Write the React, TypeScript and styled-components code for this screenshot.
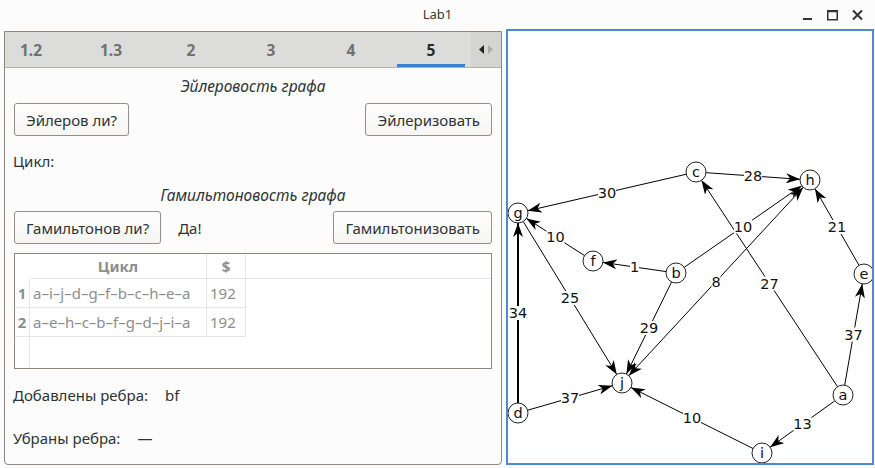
import styled, { createGlobalStyle } from "styled-components";

const GlobalStyle = createGlobalStyle`
  html, body {
    margin: 0;
    padding: 0;
    background: #fcfcfc;
  }
  body {
    font-family: "Noto Sans", "DejaVu Sans", sans-serif;
    font-size: 15px;
    color: #2e3436;
  }
`;

const Window = styled.div`
  width: 875px;
  height: 468px;
  display: flex;
  flex-direction: column;
  overflow: hidden;
`;

const TitleBar = styled.div`
  height: 29px;
  display: grid;
  grid-template-columns: 1fr auto 1fr;
  align-items: center;
`;

const Title = styled.div`
  font-size: 13px;
  color: #3a3a3a;
  padding-bottom: 1px;
`;

const Controls = styled.div`
  justify-self: end;
  display: flex;
  gap: 14px;
  padding-right: 12px;
  align-items: center;
`;

const Main = styled.div`
  display: flex;
  align-items: flex-start;
  gap: 4px;
  padding-left: 4px;
`;

const LeftPanel = styled.div`
  box-sizing: border-box;
  width: 498px;
  height: 434px;
  margin-top: 2px;
  border: 1px solid #8e877d;
  border-radius: 0 0 4px 4px;
  background: #fcfcfc;
  display: flex;
  flex-direction: column;
`;

const TabBar = styled.div`
  height: 35px;
  display: flex;
  background: #dcdcda;
  border-bottom: 1px solid #b5afa6;
`;

const TabStrip = styled.div`
  flex: 1;
  display: flex;
  overflow: hidden;
`;

const Tab = styled.div<{ $active?: boolean; $first?: boolean }>`
  flex: 0 0 80px;
  margin-left: ${(p) => (p.$first ? "-14px" : "0")};
  position: relative;
  display: flex;
  align-items: center;
  justify-content: center;
  font-weight: 700;
  font-size: 15.5px;
  color: ${(p) => (p.$active ? "#2a2a2a" : "#717171")};
  &::after {
    content: "";
    display: ${(p) => (p.$active ? "block" : "none")};
    position: absolute;
    left: 6px;
    right: 6px;
    bottom: 0;
    height: 3px;
    background: #3b7fd1;
  }
`;

const TabScroll = styled.div`
  width: 30px;
  background: #d4d4d2;
  display: flex;
  align-items: center;
  justify-content: center;
  gap: 4px;
`;

const Content = styled.div`
  display: flex;
  flex-direction: column;
  padding: 0 9px 0 8px;
`;

const Heading = styled.div<{ $top: number }>`
  margin-top: ${(p) => p.$top}px;
  height: 20px;
  line-height: 20px;
  text-align: center;
  font-style: italic;
  font-size: 15.5px;
  padding-left: 1px;
`;

const ButtonRow = styled.div<{ $top: number }>`
  margin-top: ${(p) => p.$top}px;
  display: flex;
  align-items: center;
  gap: 17px;
  padding-left: 1px;
`;

const Button = styled.button`
  height: 33px;
  padding: 0 11px;
  font-family: inherit;
  font-size: 15px;
  color: #2e3436;
  background: linear-gradient(#fefefe, #f5f5f4);
  border: 1px solid #948e85;
  border-radius: 3px;
`;

const Spacer = styled.div`
  flex: 1;
`;

const Line = styled.div<{ $top: number }>`
  margin-top: ${(p) => p.$top}px;
  height: 20px;
  line-height: 20px;
  display: flex;
  gap: 17px;
`;

const Table = styled.div`
  margin-top: 9px;
  margin-left: 1px;
  height: 116px;
  box-sizing: border-box;
  border: 1px solid #8d8982;
  background: #ffffff;
  display: grid;
  grid-template-columns: 15px 177px 39px 1fr;
  grid-template-rows: 25px 29px 29px 1fr;
  color: #8d8d8d;
`;

const Cell = styled.div<{ $head?: boolean; $right?: boolean; $bottom?: boolean; $center?: boolean }>`
  box-sizing: border-box;
  display: flex;
  align-items: center;
  justify-content: ${(p) => (p.$center ? "center" : "flex-start")};
  padding-left: ${(p) => (p.$center ? "0" : "3px")};
  font-weight: ${(p) => (p.$head ? 700 : 400)};
  border-right: ${(p) => (p.$right ? "1px solid #e6e6e6" : "none")};
  border-bottom: ${(p) => (p.$bottom ? "1px solid #e6e6e6" : "none")};
  white-space: nowrap;
  overflow: hidden;
`;

const GraphPanel = styled.div`
  box-sizing: border-box;
  width: 368px;
  height: 436px;
  border: 2px solid #4d8bd4;
  background: #ffffff;
  overflow: hidden;
  svg {
    display: block;
  }
`;

type P = [number, number];

const nodes: Record<string, P> = {
  c: [696, 172],
  h: [810, 180],
  g: [518, 213],
  f: [593, 261],
  b: [676, 273],
  e: [864, 274],
  j: [622, 383],
  d: [518, 413],
  a: [843, 395],
  i: [762, 453],
};

const edges: { from: string; to: string; w: number; both?: boolean; thick?: boolean }[] = [
  { from: "c", to: "h", w: 28 },
  { from: "c", to: "g", w: 30 },
  { from: "f", to: "g", w: 10 },
  { from: "b", to: "f", w: 1 },
  { from: "b", to: "h", w: 10 },
  { from: "j", to: "h", w: 8, both: true },
  { from: "a", to: "c", w: 27 },
  { from: "e", to: "h", w: 21 },
  { from: "a", to: "e", w: 37 },
  { from: "a", to: "i", w: 13 },
  { from: "i", to: "j", w: 10 },
  { from: "d", to: "j", w: 37 },
  { from: "d", to: "g", w: 34, thick: true },
  { from: "g", to: "j", w: 25 },
  { from: "b", to: "j", w: 29 },
];

const R = 10;

function Graph() {
  return (
    <svg width="364" height="432" viewBox="508 31 364 432">
      <defs>
        <marker
          id="arr"
          viewBox="0 0 14 10"
          refX="14"
          refY="5"
          markerWidth="14"
          markerHeight="10"
          markerUnits="userSpaceOnUse"
          orient="auto-start-reverse"
        >
          <path d="M0,0 L14,5 L0,10 L4,5 Z" fill="#000" />
        </marker>
      </defs>
      {edges.map((e, k) => {
        const [x1, y1] = nodes[e.from];
        const [x2, y2] = nodes[e.to];
        const len = Math.hypot(x2 - x1, y2 - y1);
        const ux = (x2 - x1) / len;
        const uy = (y2 - y1) / len;
        return (
          <line
            key={k}
            x1={x1 + ux * R}
            y1={y1 + uy * R}
            x2={x2 - ux * R}
            y2={y2 - uy * R}
            stroke="#000"
            strokeWidth={e.thick ? 2 : 1}
            markerEnd="url(#arr)"
            markerStart={e.both ? "url(#arr)" : undefined}
          />
        );
      })}
      {edges.map((e, k) => {
        const [x1, y1] = nodes[e.from];
        const [x2, y2] = nodes[e.to];
        const mx = (x1 + x2) / 2;
        const my = (y1 + y2) / 2;
        const t = String(e.w);
        const w = t.length * 9;
        return (
          <g key={k}>
            <rect x={mx - w / 2} y={my - 7} width={w} height={14} fill="#fff" />
            <text
              x={mx}
              y={my + 5}
              textAnchor="middle"
              fontFamily="DejaVu Sans, sans-serif"
              fontSize="14.5"
              fill="#111"
            >
              {t}
            </text>
          </g>
        );
      })}
      {Object.entries(nodes).map(([name, [x, y]]) => (
        <g key={name}>
          <circle cx={x} cy={y} r={R} fill="#fff" stroke="#222" strokeWidth="1" />
          <text
            x={x}
            y={y + 5}
            textAnchor="middle"
            fontFamily="DejaVu Sans, sans-serif"
            fontSize="14.5"
            fill="#111"
          >
            {name}
          </text>
        </g>
      ))}
    </svg>
  );
}

export default function App() {
  const tabs = ["1.2", "1.3", "2", "3", "4", "5"];
  const rows = [
    ["a–i–j–d–g–f–b–c–h–e–a", "192"],
    ["a–e–h–c–b–f–g–d–j–i–a", "192"],
  ];
  return (
    <Window>
      <GlobalStyle />
      <TitleBar>
        <div />
        <Title>Lab1</Title>
        <Controls>
          <svg width="10" height="12" viewBox="0 0 10 12">
            <rect x="0" y="9" width="9" height="2" fill="#333" />
          </svg>
          <svg width="11" height="12" viewBox="0 0 11 12">
            <rect x="0.75" y="1.75" width="9.5" height="9" fill="none" stroke="#333" strokeWidth="1.5" />
            <rect x="0.75" y="1.75" width="9.5" height="1.5" fill="#333" />
          </svg>
          <svg width="11" height="12" viewBox="0 0 11 12">
            <path d="M1,1.5 L10,10.5 M10,1.5 L1,10.5" stroke="#333" strokeWidth="2" />
          </svg>
        </Controls>
      </TitleBar>
      <Main>
        <LeftPanel>
          <TabBar>
            <TabStrip>
              {tabs.map((t, k) => (
                <Tab key={t} $first={k === 0} $active={t === "5"}>
                  {t}
                </Tab>
              ))}
            </TabStrip>
            <TabScroll>
              <svg width="5" height="9" viewBox="0 0 5 9">
                <path d="M5,0 L0,4.5 L5,9 Z" fill="#222" />
              </svg>
              <svg width="5" height="9" viewBox="0 0 5 9">
                <path d="M0,0 L5,4.5 L0,9 Z" fill="#aaa" />
              </svg>
            </TabScroll>
          </TabBar>
          <Content>
            <Heading $top={8}>Эйлеровость графа</Heading>
            <ButtonRow $top={7}>
              <Button>Эйлеров ли?</Button>
              <Spacer />
              <Button>Эйлеризовать</Button>
            </ButtonRow>
            <Line $top={15}>Цикл:</Line>
            <Heading $top={14}>Гамильтоновость графа</Heading>
            <ButtonRow $top={6}>
              <Button>Гамильтонов ли?</Button>
              <span>Да!</span>
              <Spacer />
              <Button>Гамильтонизовать</Button>
            </ButtonRow>
            <Table>
              <Cell />
              <Cell $head $center $right $bottom>Цикл</Cell>
              <Cell $head $center $right $bottom>$</Cell>
              <Cell $bottom />
              {rows.map(([path, cost], k) => [
                <Cell key={`n${k}`} $head $center $right $bottom>{k + 1}</Cell>,
                <Cell key={`p${k}`} $right $bottom>{path}</Cell>,
                <Cell key={`c${k}`} $right $bottom>{cost}</Cell>,
                <Cell key={`f${k}`} />,
              ])}
              <Cell $right />
              <Cell />
              <Cell />
              <Cell />
            </Table>
            <Line $top={16}>
              <span>Добавлены ребра:</span>
              <span>bf</span>
            </Line>
            <Line $top={23}>
              <span>Убраны ребра:</span>
              <span>—</span>
            </Line>
          </Content>
        </LeftPanel>
        <GraphPanel>
          <Graph />
        </GraphPanel>
      </Main>
    </Window>
  );
}
